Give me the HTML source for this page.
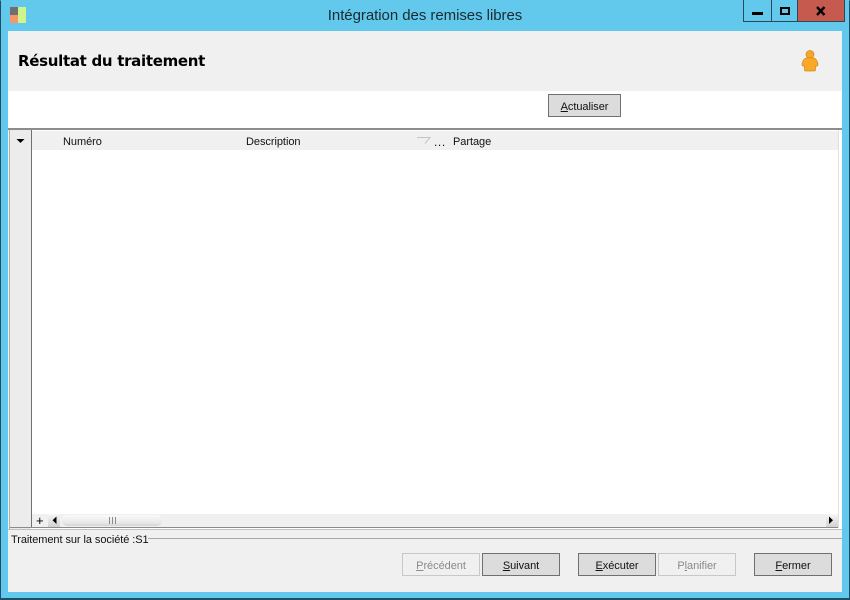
<!DOCTYPE html>
<html><head><meta charset="utf-8"><style>
html,body{margin:0;padding:0;width:850px;height:600px;overflow:hidden;background:#63c9ec}
*{box-sizing:border-box}
div,span{position:absolute}
u{position:static;text-decoration:underline}
body{font-family:"Liberation Sans",sans-serif;font-size:11px;color:#111}
.t{white-space:nowrap;line-height:14px}
.b{height:23px;border:1px solid #707070;background:#dcdcdc;text-align:center;line-height:25px;font-size:11px;color:#111;letter-spacing:-.05px;overflow:hidden}
.d{border-color:#c8c8c8;background:#f0f0f0;color:#8a8a8a}
</style></head><body>
<div style="left:0;top:0;width:850px;height:600px;border:1px solid #1f4f68;border-top-color:#63c9ec;border-bottom-width:2px"></div>
<div style="left:10px;top:7px;width:8px;height:8px;background:#6f6f6f"></div>
<div style="left:10px;top:15px;width:8px;height:8px;background:#f79468"></div>
<div style="left:18px;top:7px;width:8px;height:16px;background:#cdf58c"></div>
<div class="t" style="left:0;top:7px;width:850px;text-align:center;font-size:15px;line-height:18px;color:#1a2a33;letter-spacing:-.05px">Intégration des remises libres</div>

<div style="left:743px;top:0;width:29px;height:22px;border:1px solid #2a4a5c;border-top:0"></div>
<div style="left:752px;top:12px;width:11px;height:3px;background:#000"></div>
<div style="left:771px;top:0;width:27px;height:22px;border-bottom:1px solid #2a4a5c"></div>
<div style="left:780px;top:7px;width:10px;height:8px;border:2px solid #000"></div>
<div style="left:797px;top:0;width:48px;height:22px;background:#c75a4f;border:1px solid #2a4a5c;border-top:0"></div>
<svg style="position:absolute;left:815px;top:6px" width="12" height="10"><path d="M2 1L9.5 9M9.5 1L2 9" stroke="#000" stroke-width="2.4" fill="none"/></svg>

<div style="left:8px;top:31px;width:834px;height:561px;background:#f0f0f0"></div>
<div style="left:8px;top:91px;width:834px;height:37px;background:#fff"></div>
<div class="t" style="left:18px;top:51px;line-height:21px;font-weight:bold;color:#000;font-family:'DejaVu Sans','Liberation Sans',sans-serif;letter-spacing:-.3px;font-size:15px">Résultat du traitement</div>

<svg style="position:absolute;left:800px;top:49px" width="20" height="24" viewBox="0 0 20 24"><circle cx="10" cy="5.5" r="4" fill="#f7a528" stroke="#c98a20" stroke-width=".7"/><path d="M5 9.5C7 8.5 13 8.5 15 9.5C16.5 10.5 18 13.5 18 15.5C18 17 16.5 17.5 15.5 17L15.5 21C15.5 22 14.5 22 14 22H6C5.5 22 4.5 22 4.5 21L4.5 17C3.5 17.5 2 17 2 15.5C2 13.5 3.5 10.5 5 9.5Z" fill="#fba827" stroke="#c98a20" stroke-width=".7"/></svg>

<div class="b" style="left:548px;top:94px;width:73px"><u>A</u>ctualiser</div>

<div style="left:8px;top:128px;width:834px;height:2px;background:#8c8c8c"></div>
<div style="left:9px;top:130px;width:833px;height:399px;background:#fff"></div>
<div style="left:9px;top:130px;width:1px;height:399px;background:#b0b0b0"></div>
<div style="left:10px;top:130px;width:21px;height:399px;background:#ececec"></div>
<div style="left:31px;top:130px;width:1px;height:398px;background:#707070"></div>
<div style="left:32px;top:131px;width:806px;height:19px;background:#f0f0f0"></div>
<svg style="position:absolute;left:16px;top:138px" width="10" height="6"><path d="M0.5 1H8.5L4.5 5Z" fill="#000"/></svg>
<div class="t" style="left:63px;top:135px;letter-spacing:-.05px">Numéro</div>
<div class="t" style="left:246px;top:135px;letter-spacing:-.05px">Description</div>
<svg style="position:absolute;left:416px;top:136px" width="16" height="9"><path d="M1 1.5H14L9 7.5" stroke="#c4c4c4" fill="none"/></svg>
<div class="t" style="left:434px;top:135px;font-size:12px;letter-spacing:.6px">...</div>
<div class="t" style="left:453px;top:135px;letter-spacing:-.05px">Partage</div>

<div style="left:32px;top:514px;width:806px;height:14px;background:#f0f0f0"></div>
<div class="t" style="left:36px;top:514px;font-size:13px;color:#000">+</div>
<div style="left:48px;top:514px;width:12px;height:13px;background:linear-gradient(#f6f6f6,#d2d2d2)"></div>
<svg style="position:absolute;left:52px;top:516px" width="6" height="9"><path d="M4.5 0.5V8L0.5 4.2Z" fill="#000"/></svg>
<div style="left:62px;top:515px;width:100px;height:11px;border-radius:5px;background:linear-gradient(#fafafa,#e8e8e8 70%,#d4d4d4)"></div>
<div style="left:109px;top:517px;width:7px;height:7px;border-left:1px solid #8a8a8a;border-right:1px solid #8a8a8a"></div>
<div style="left:112px;top:517px;width:1px;height:7px;background:#8a8a8a"></div>
<div style="left:826px;top:514px;width:12px;height:13px;background:linear-gradient(#f6f6f6,#d2d2d2)"></div>
<svg style="position:absolute;left:828px;top:516px" width="6" height="9"><path d="M1 0.5V8L5 4.2Z" fill="#000"/></svg>
<div style="left:10px;top:527px;width:828px;height:1px;background:#8a8a8a"></div>
<div style="left:838px;top:130px;width:1px;height:398px;background:#e0e0e0"></div>

<div style="left:8px;top:529px;width:834px;height:63px;background:#f0f0f0;border-top:1px solid #c0c0c0"></div>
<div style="left:148px;top:538px;width:694px;height:1px;background:#a8a8a8"></div>
<div class="t" style="left:11px;top:533px;color:#111;letter-spacing:-.07px">Traitement sur la société :S1</div>

<div class="b d" style="left:402px;top:553px;width:78px"><u>P</u>récédent</div>
<div class="b" style="left:482px;top:553px;width:78px"><u>S</u>uivant</div>
<div class="b" style="left:578px;top:553px;width:78px"><u>E</u>xécuter</div>
<div class="b d" style="left:658px;top:553px;width:78px">P<u>l</u>anifier</div>
<div class="b" style="left:754px;top:553px;width:78px"><u>F</u>ermer</div>
</body></html>
